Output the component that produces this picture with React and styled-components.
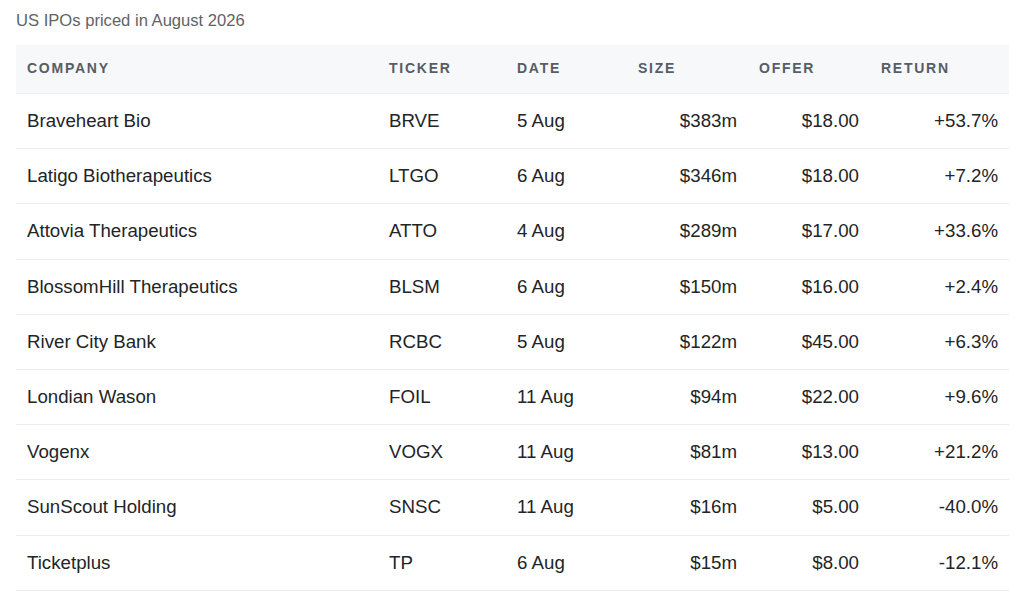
import React from "react";
import styled, { createGlobalStyle } from "styled-components";

const Global = createGlobalStyle`
  html, body { margin: 0; padding: 0; background: #ffffff; }
  body { font-family: "Liberation Sans", Arial, sans-serif; }
`;

const Page = styled.div`
  padding: 10px 15px 0 16px;
`;

const Caption = styled.div`
  font-size: 16.6px;
  line-height: 22px;
  color: #5f6368;
  margin-bottom: 13px;
`;

const Table = styled.table`
  width: 993px;
  border-collapse: collapse;
  table-layout: fixed;
`;

const HeadCell = styled.th`
  background: #f6f8fa;
  height: 46px;
  padding: 0 11px 2px;
  text-align: left;
  vertical-align: middle;
  font-size: 14px;
  line-height: 14px;
  font-weight: 700;
  letter-spacing: 1.75px;
  text-transform: uppercase;
  color: #575d66;
  border-bottom: 1px solid #eceef1;
`;

const Row = styled.tr`
  border-bottom: 1px solid #ebedf0;
`;

const Cell = styled.td`
  height: 54.2px;
  padding: 0 11px;
  font-size: 18.7px;
  color: #222426;
  text-align: ${(p) => (p.$num ? "right" : "left")};
  white-space: nowrap;
`;

const data = [
  ["Braveheart Bio", "BRVE", "5 Aug", "$383m", "$18.00", "+53.7%"],
  ["Latigo Biotherapeutics", "LTGO", "6 Aug", "$346m", "$18.00", "+7.2%"],
  ["Attovia Therapeutics", "ATTO", "4 Aug", "$289m", "$17.00", "+33.6%"],
  ["BlossomHill Therapeutics", "BLSM", "6 Aug", "$150m", "$16.00", "+2.4%"],
  ["River City Bank", "RCBC", "5 Aug", "$122m", "$45.00", "+6.3%"],
  ["Londian Wason", "FOIL", "11 Aug", "$94m", "$22.00", "+9.6%"],
  ["Vogenx", "VOGX", "11 Aug", "$81m", "$13.00", "+21.2%"],
  ["SunScout Holding", "SNSC", "11 Aug", "$16m", "$5.00", "-40.0%"],
  ["Ticketplus", "TP", "6 Aug", "$15m", "$8.00", "-12.1%"],
];

const cols = [362, 128, 121, 121, 122, 139];
const heads = ["Company", "Ticker", "Date", "Size", "Offer", "Return"];

export default function App() {
  return (
    <>
      <Global />
      <Page>
        <Caption>US IPOs priced in August 2026</Caption>
        <Table>
          <colgroup>
            {cols.map((w, i) => (
              <col key={i} style={{ width: w }} />
            ))}
          </colgroup>
          <thead>
            <tr>
              {heads.map((h) => (
                <HeadCell key={h}>{h}</HeadCell>
              ))}
            </tr>
          </thead>
          <tbody>
            {data.map((r) => (
              <Row key={r[1]}>
                {r.map((v, i) => (
                  <Cell key={i} $num={i >= 3}>
                    {v}
                  </Cell>
                ))}
              </Row>
            ))}
          </tbody>
        </Table>
      </Page>
    </>
  );
}
